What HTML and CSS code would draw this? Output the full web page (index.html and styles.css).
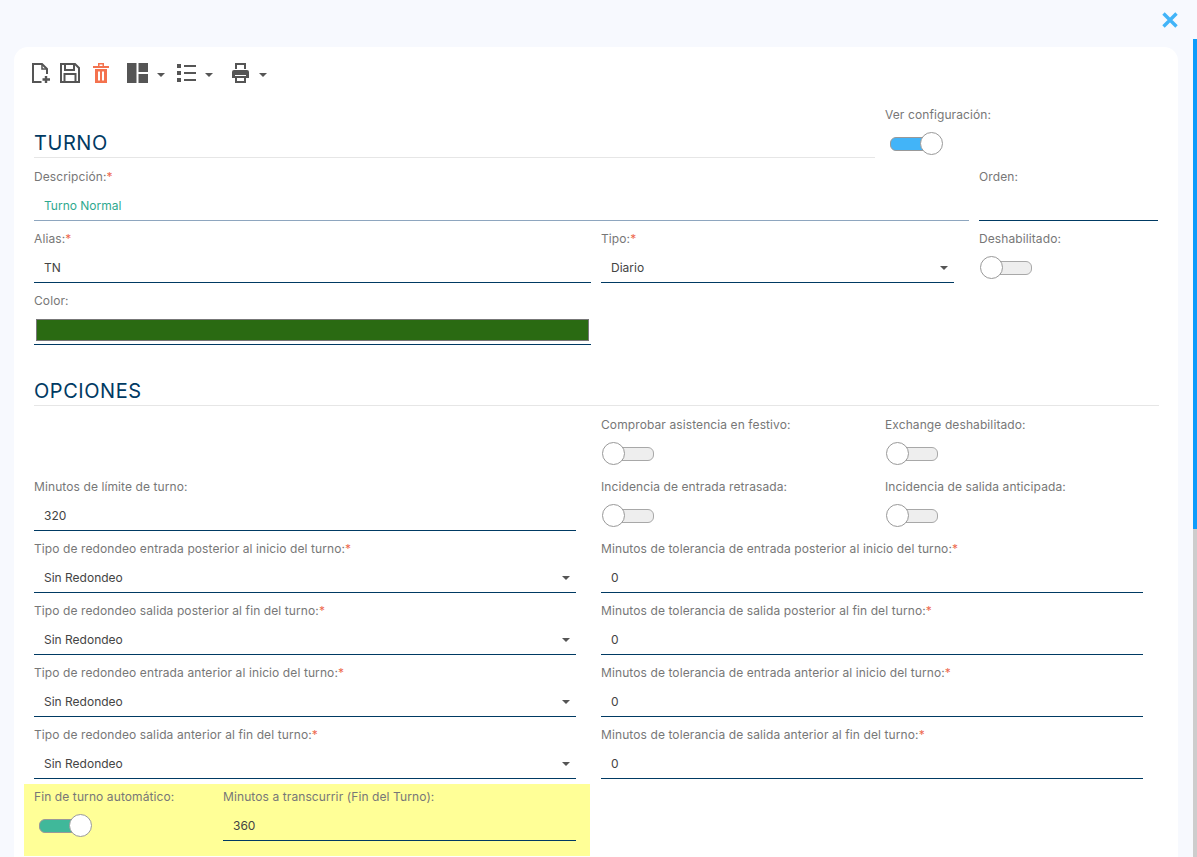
FILE: index.html
```html
<!DOCTYPE html>
<html lang="es">
<head>
<meta charset="utf-8">
<title>Turno</title>
<link rel="stylesheet" href="styles.css">
</head>
<body>
<div class="topbar">
  <svg class="close" width="16" height="16" viewBox="0 0 16 16"><path d="M1.500 1.500l13 13M14.500 1.500l-13 13" stroke="#42b4f8" stroke-width="3.400" fill="none"/></svg>
</div>
<div class="scrollbar"><i></i></div>
<main class="card">
  <div class="toolbar">
    <span class="tool t1"><svg width="18" height="20" viewBox="0 0 18 20" fill="none" stroke="#555" stroke-width="2"><path d="M9.500 19H1V1h9l5 5v5"/><path d="M10 1v5h5" stroke-width="1.500"/><path d="M14 13v7M10.500 16.500H18" stroke-width="2.400"/></svg></span>
    <span class="tool t2"><svg width="20" height="20" viewBox="0 0 20 20" fill="none" stroke="#555" stroke-width="2"><path d="M1 1h14l4 4v14H1z"/><path d="M5 1v6h9V1"/><path d="M4.500 19v-8h11v8"/></svg></span>
    <span class="tool t3"><svg width="16" height="20" viewBox="0 0 16 20" fill="#f4724e"><path d="M0 3h16v2H0zM5 0h6v3H9.500V1.500h-3V3H5z"/><path fill-rule="evenodd" d="M2 6h12v14H2zM5 8.500v9h2v-9zM9 8.500v9h2v-9z"/></svg></span>
    <span class="tool t4"><svg width="21" height="20" viewBox="0 0 21 20" fill="#555"><path d="M0 0h9.500v20H0zM11.500 0H21v9H11.500zM11.500 11H21v9H11.500z"/></svg><i class="caret"></i></span>
    <span class="tool t5"><svg width="19" height="18" viewBox="0 0 19 18" fill="#555"><path d="M0 0h4v4H0zM0 7h4v4H0zM0 14h4v4H0zM7 1h12v2H7zM7 8h12v2H7zM7 15h12v2H7z"/></svg><i class="caret"></i></span>
    <span class="tool t6"><svg width="17" height="20" viewBox="0 0 17 20" fill="#555"><path d="M3 0h11v6h-2V2H5v4H3z"/><path d="M2 7h13a2 2 0 0 1 2 2v6h-3v-3H3v3H0V9a2 2 0 0 1 2-2z"/><path fill-rule="evenodd" d="M3 13h11v7H3zM5 15v3h7v-3z"/></svg><i class="caret c6"></i></span>
  </div>

  <section class="head-row">
    <h2 class="section-title turno">TURNO</h2>
    <div class="config">
      <label class="lbl">Ver configuración:</label>
      <span class="switch on blue"><i></i></span>
    </div>
  </section>

  <div class="row r-desc">
    <div class="field"><label class="lbl">Descripción:<b>*</b></label><div class="input pale teal">Turno Normal</div></div>
    <div class="field"><label class="lbl">Orden:</label><div class="input"></div></div>
  </div>
  <div class="row r-alias">
    <div class="field"><label class="lbl">Alias:<b>*</b></label><div class="input">TN</div></div>
    <div class="field"><label class="lbl">Tipo:<b>*</b></label><div class="input select">Diario</div></div>
    <div class="field"><label class="lbl">Deshabilitado:</label><span class="switch"><i></i></span></div>
  </div>
  <div class="row r-color">
    <div class="field"><label class="lbl">Color:</label><div class="input color"><span class="swatch"></span></div></div>
  </div>

  <h2 class="section-title opciones">OPCIONES</h2>

  <div class="row r-opts">
    <div class="field"></div>
    <div class="field"><label class="lbl">Comprobar asistencia en festivo:</label><span class="switch"><i></i></span></div>
    <div class="field"><label class="lbl">Exchange deshabilitado:</label><span class="switch"><i></i></span></div>
  </div>
  <div class="row r-opts">
    <div class="field"><label class="lbl">Minutos de límite de turno:</label><div class="input">320</div></div>
    <div class="field"><label class="lbl">Incidencia de entrada retrasada:</label><span class="switch"><i></i></span></div>
    <div class="field"><label class="lbl">Incidencia de salida anticipada:</label><span class="switch"><i></i></span></div>
  </div>
  <div class="row r-two">
    <div class="field"><label class="lbl">Tipo de redondeo entrada posterior al inicio del turno:<b>*</b></label><div class="input select">Sin Redondeo</div></div>
    <div class="field"><label class="lbl">Minutos de tolerancia de entrada posterior al inicio del turno:<b>*</b></label><div class="input">0</div></div>
  </div>
  <div class="row r-two">
    <div class="field"><label class="lbl">Tipo de redondeo salida posterior al fin del turno:<b>*</b></label><div class="input select">Sin Redondeo</div></div>
    <div class="field"><label class="lbl">Minutos de tolerancia de salida posterior al fin del turno:<b>*</b></label><div class="input">0</div></div>
  </div>
  <div class="row r-two">
    <div class="field"><label class="lbl">Tipo de redondeo entrada anterior al inicio del turno:<b>*</b></label><div class="input select">Sin Redondeo</div></div>
    <div class="field"><label class="lbl">Minutos de tolerancia de entrada anterior al inicio del turno:<b>*</b></label><div class="input">0</div></div>
  </div>
  <div class="row r-two">
    <div class="field"><label class="lbl">Tipo de redondeo salida anterior al fin del turno:<b>*</b></label><div class="input select">Sin Redondeo</div></div>
    <div class="field"><label class="lbl">Minutos de tolerancia de salida anterior al fin del turno:<b>*</b></label><div class="input">0</div></div>
  </div>
  <div class="highlight">
    <div class="field"><label class="lbl">Fin de turno automático:</label><span class="switch on green"><i></i></span></div>
    <div class="field"><label class="lbl">Minutos a transcurrir (Fin del Turno):</label><div class="input">360</div></div>
  </div>
</main>
</body>
</html>
```
FILE: styles.css
```css
* { box-sizing: border-box; }
html, body { margin: 0; height: 857px; overflow: hidden; }
body { background: #f7f9fe; font-family: Inter, "Liberation Sans", sans-serif; position: relative; }
.topbar { height: 47px; display: flex; justify-content: flex-end; align-items: flex-start; padding: 12px 19px 0 0; }
.scrollbar { position: absolute; right: 0; top: 39px; bottom: 0; width: 4px; background: #cdcdcd; }
.scrollbar i { display: block; height: 490px; background: #0d9dfb; }
.card { margin: 0 19px 0 14px; height: 810px; background: #fff; border-radius: 14px 14px 0 0; padding: 0 19px 0 20px; overflow: hidden; }
.toolbar { height: 53px; display: flex; align-items: flex-start; padding-top: 15px; }
.tool { display: inline-flex; align-items: center; height: 22px; }
.t1 { margin-left: -2px; }
.t2 { margin-left: 10px; }
.t3 { margin-left: 13px; }
.t4 { margin-left: 18px; }
.t5 { margin-left: 12px; }
.t6 { margin-left: 19px; }
.caret { display: block; width: 0; height: 0; margin: 3px 0 0 9px; border: 4px solid transparent; border-top-color: #555; border-bottom: 0; }
.c6 { margin-left: 10px; }
.head-row { display: grid; grid-template-columns: 841px 1fr; column-gap: 10px; height: 58px; }
.section-title { margin: 0; height: 27px; padding-bottom: 2px; font: 400 20px/24px Inter, sans-serif; letter-spacing: .55px; color: #003a63; border-bottom: 1px solid #e6e6e6; }
.turno { align-self: end; }
.config { padding-top: 6px; }
.lbl { display: block; height: 18px; margin-bottom: 1px; font-size: 12px; line-height: 18px; letter-spacing: .1px; color: #777; white-space: nowrap; }
.lbl b { color: #ee6a50; font-weight: 400; }
.row { display: grid; column-gap: 10px; height: 62px; }
.r-desc { grid-template-columns: 935px 179px; margin-top: 1px; }
.r-alias { grid-template-columns: 557px 353px 1fr; }
.r-alias .field:last-child { margin-left: 15px; }
.r-color { grid-template-columns: 557px; }
.r-opts { grid-template-columns: 542px 259px 1fr; column-gap: 25px; }
.r-two { grid-template-columns: 542px 542px; column-gap: 25px; }
.field { padding-top: 9px; min-width: 0; }
.input { height: 34px; padding: 3px 10px 0; border-bottom: 1px solid #003a63; display: flex; align-items: center; font-size: 12px; color: #444; position: relative; }
.pale { border-bottom-color: #8ea6bf; }
.teal { color: #2fa98f; }
.select::after { content: ""; position: absolute; right: 6px; top: 17px; border: 4px solid transparent; border-top-color: #555; border-bottom: 0; }
.color { padding: 5px 2px 0; }
.swatch { display: block; width: 100%; height: 22px; background: #2a6a12; border: 1px solid #777; }
.opciones { margin-top: 34px; }
.opciones + .row { margin-top: 1px; }
.switch { display: block; position: relative; width: 52px; height: 23px; margin: 8px 0 0 1px; }
.switch::before { content: ""; position: absolute; left: 1px; right: 0; top: 5px; height: 12px; border-radius: 6px; background: #eee; border: 1px solid #a8a8a8; }
.switch i { position: absolute; left: 0; top: 0; width: 23px; height: 23px; border-radius: 50%; background: #fff; border: 1px solid #999; }
.switch.on { width: 53px; }
.switch.on i { left: 31px; }
.config .switch { margin: 8px 0 0 4px; }
.blue::before { background: #42b4f8; border-color: #999; }
.green::before { background: #40b89a; border-color: #999; }
.highlight { display: grid; grid-template-columns: 189px 353px; width: 566px; margin: 5px 0 0 -10px; height: 72px; background: #ffff97; padding-left: 10px; }
.highlight .field { padding-top: 4px; }
.highlight .switch { margin: 8px 0 0 4px; }
```
